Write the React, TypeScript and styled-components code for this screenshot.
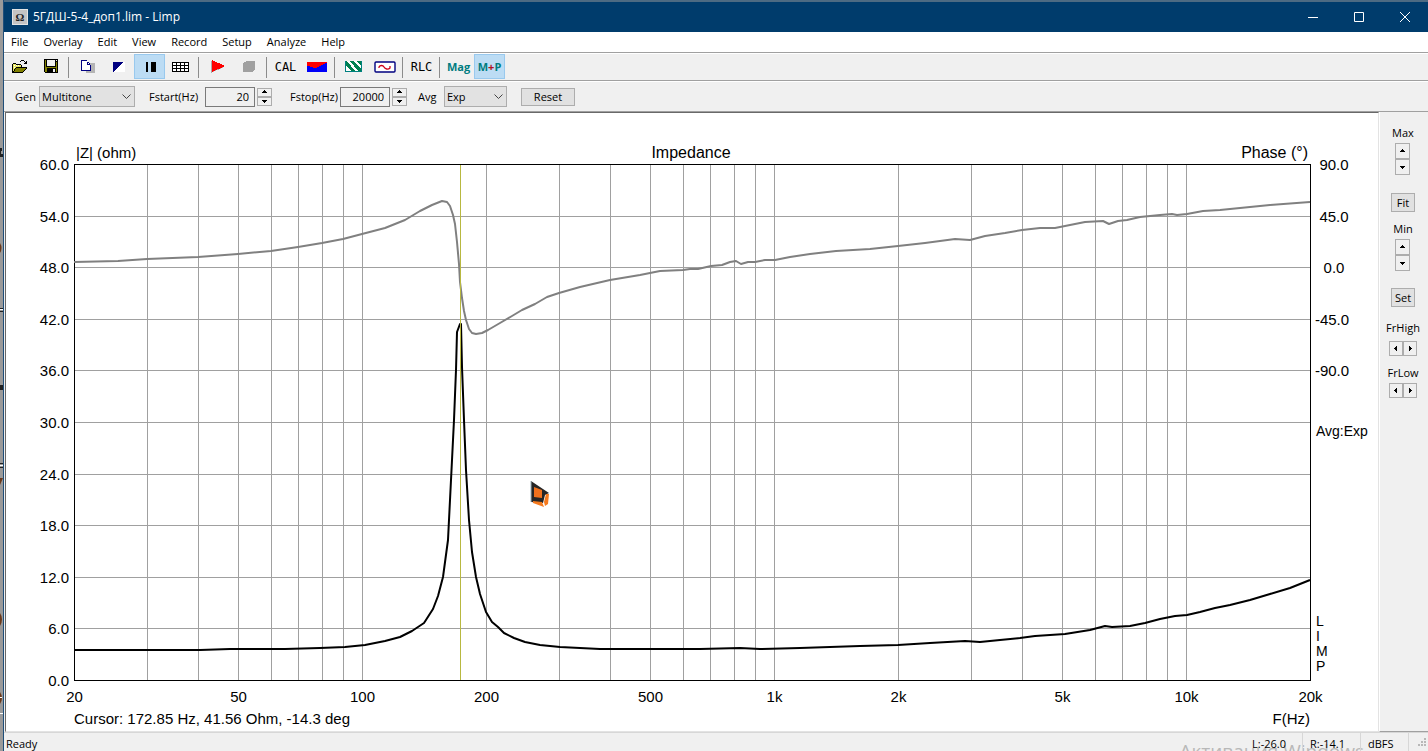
import React from "react";
import styled, { createGlobalStyle } from "styled-components";

const GlobalStyle = createGlobalStyle`
  * { box-sizing: border-box; }
  body {
    margin: 0;
    background: #f0f0f0;
    font-family: "Open Sans", "Noto Sans", sans-serif;
    font-size: 12px;
    line-height: 16px;
    color: #000;
  }
  button, input, select { font: inherit; color: inherit; margin: 0; }
`;

const Desktop = styled.div`
  display: grid;
  grid-template-columns: 4px minmax(0, 1fr);
  min-height: 100vh;
`;

const DesktopEdge = styled.div`
  background: #9a9a9a;
  border-right: 1px solid #1f4e79;
`;

const EdgeArt = styled.svg`
  display: block;
`;

const Window = styled.div`
  display: flex;
  flex-direction: column;
  min-width: 0;
`;

const TitleBar = styled.header`
  display: flex;
  align-items: center;
  height: 32px;
  padding-left: 8px;
  background: #003c6c;
  border-top: 2px solid #4d6b83;
  color: #fff;
`;

const AppIcon = styled.span`
  width: 16px;
  height: 16px;
  margin-right: 5px;
  background: #c4c4c4;
  border: 1px solid #e4e4e4;
  color: #222;
  font: bold 11px/14px "Liberation Serif", serif;
  text-align: center;
`;

const Title = styled.h1`
  flex: 1;
  margin: 0;
  font-size: 12px;
  font-weight: 400;
`;

const CaptionButton = styled.button`
  display: grid;
  place-items: center;
  width: 46px;
  height: 30px;
  padding: 0;
  border: 0;
  background: transparent;
`;

const MenuBar = styled.nav`
  display: flex;
  height: 21px;
  padding-left: 7px;
  gap: 15px;
  background: #fff;
  border-bottom: 1px solid #a0a0a0;
`;

const MenuItem = styled.button`
  padding: 0;
  border: 0;
  background: transparent;
  font-size: 11px;
  line-height: 18px;
`;

const Toolbar = styled.div`
  display: flex;
  height: 28px;
  background: #f0f0f0;
  border-top: 1px solid #fff;
  border-bottom: 1px solid #a0a0a0;
`;

const Tool = styled.button<{ $on?: boolean }>`
  display: grid;
  place-items: center;
  flex: none;
  width: 31px;
  height: 25px;
  padding: 0;
  background: ${(p) => (p.$on ? "#bcdcf4" : "transparent")};
  border: 1px solid ${(p) => (p.$on ? "#99c9ee" : "transparent")};
`;

const ToolSeparator = styled.span`
  flex: none;
  width: 1px;
  height: 21px;
  margin: 3px 3px 0 2px;
  background: #8c8c8c;
`;

const ToolCode = styled.span`
  font: 12px/24px "DejaVu Sans Mono", monospace;
`;

const ToolWord = styled.span`
  color: #007c80;
  font: bold 11px/24px "Open Sans", sans-serif;
`;

const RedPlus = styled.span`
  color: #b01020;
`;

const SettingsBar = styled.div`
  display: flex;
  align-items: center;
  height: 31px;
  padding-left: 11px;
  background: #f0f0f0;
  border-top: 1px solid #fff;
  border-bottom: 1px solid #a0a0a0;
`;

const FieldLabel = styled.label<{ $width: number }>`
  flex: none;
  width: ${(p) => p.$width}px;
  font-size: 11px;
  white-space: nowrap;
`;

const SelectBox = styled.span<{ $width: number }>`
  display: grid;
  align-items: center;
  width: ${(p) => p.$width}px;
  margin-right: 14px;
`;

const Select = styled.select`
  grid-area: 1 / 1;
  width: 100%;
  height: 21px;
  padding: 0 2px;
  appearance: none;
  background: #e2e2e2;
  border: 1px solid #adadad;
  border-radius: 0;
  font-size: 11px;
`;

const Chevron = styled.svg`
  grid-area: 1 / 1;
  justify-self: end;
  margin-right: 4px;
  pointer-events: none;
`;

const NumberInput = styled.input`
  width: 50px;
  height: 20px;
  margin-right: 2px;
  padding: 0 5px;
  background: #f0f0f0;
  border: 1px solid #7a7a7a;
  font-size: 11px;
  text-align: right;
`;

const Spinner = styled.span<{ $row?: boolean }>`
  display: flex;
  flex-direction: ${(p) => (p.$row ? "row" : "column")};
`;

const SpinButton = styled.button<{ $w: number; $h: number }>`
  display: grid;
  place-items: center;
  width: ${(p) => p.$w}px;
  height: ${(p) => p.$h}px;
  padding: 0;
  background: #f0f0f0;
  border: 1px solid #adadad;
`;

const PushButton = styled.button<{ $w: number; $h: number }>`
  width: ${(p) => p.$w}px;
  height: ${(p) => p.$h}px;
  padding: 0;
  background: #e1e1e1;
  border: 1px solid #adadad;
  font-size: 11px;
  line-height: 16px;
`;

const FieldGroup = styled.div<{ $after: number }>`
  display: flex;
  align-items: center;
  margin-right: ${(p) => p.$after}px;
`;

const Content = styled.main`
  display: flex;
  flex: 1;
  min-height: 0;
`;

const ChartPanel = styled.section`
  display: flex;
  flex: 1;
  min-width: 0;
  margin-left: 1px;
  background: #fff;
  border-top: 1px solid #696969;
  border-left: 1px solid #696969;
  border-right: 1px solid #e3e3e3;
  border-bottom: 1px solid #e3e3e3;
`;

const ChartSvg = styled.svg`
  display: block;
  flex: 1;
  width: 100%;
  min-width: 0;
  font-family: "Liberation Sans", Arial, sans-serif;
  font-size: 15px;
`;

const SidePanel = styled.aside`
  display: flex;
  flex: none;
  flex-direction: column;
  align-items: center;
  width: 49px;
  padding: 13px 2px 0 0;
  background: #f0f0f0;
  border-left: 1px solid #fff;
  border-bottom: 1px solid #a0a0a0;
`;

const SideGroup = styled.div<{ $after: number; $gap?: number }>`
  display: flex;
  flex-direction: column;
  align-items: center;
  gap: ${(p) => p.$gap ?? 2}px;
  margin-bottom: ${(p) => p.$after}px;
`;

const SideLabel = styled.span`
  font-size: 11px;
`;

const StatusBar = styled.footer`
  position: relative;
  display: flex;
  height: 19px;
  padding-left: 2px;
  overflow: hidden;
  background: #f0f0f0;
  border-top: 1px solid #d7d7d7;
  font-size: 11px;
  line-height: 22px;
`;

const StatusMessage = styled.span`
  flex: 1;
`;

const StatusCell = styled.span<{ $w: number }>`
  z-index: 1;
  width: ${(p) => p.$w}px;
  padding-left: 7px;
  border-right: 1px solid #d7d7d7;
`;

const SizeGrip = styled.svg`
  margin: 5px 1px 0 8px;
`;

const Watermark = styled.span`
  position: absolute;
  right: 64px;
  top: 6px;
  color: #b8b8b8;
  font-size: 19px;
  line-height: 24px;
  white-space: nowrap;
`;

const LEFT = 74;
const RIGHT = 1310;
const TOP = 164;
const BOTTOM = 680;
const DECADE = (RIGHT - LEFT) / 3;

const freqX = (f: number) => Math.round(LEFT + DECADE * Math.log10(f / 20)) + 0.5;
const rowY = (i: number) => Math.round(TOP + ((BOTTOM - TOP) / 10) * i - 0.1) + 0.5;

const gridFreqs = [10, 100, 1000, 10000]
  .flatMap((d) => [1, 2, 3, 4, 5, 6, 7, 8, 9].map((n) => n * d))
  .filter((f) => f > 20 && f < 20000);

const freqLabels: [number, string][] = [
  [20, "20"], [50, "50"], [100, "100"], [200, "200"], [500, "500"],
  [1000, "1k"], [2000, "2k"], [5000, "5k"], [10000, "10k"], [20000, "20k"],
];
const ohmLabels = ["60.0", "54.0", "48.0", "42.0", "36.0", "30.0", "24.0", "18.0", "12.0", "6.0", "0.0"];
const phaseLabels = ["90.0", "45.0", "0.0", "-45.0", "-90.0"];

const phaseCurve =
  "74,262 118,261 147,259 198,257 238,254 271,251 298,247 322,243 343,239 362,234 385,228 405,220 420,211 432,205 442,201 447,202 450,206 453,215 455,224 457,242 459,264 460,282 462,298 464,311 466,320 469,329 472,333 476,334 482,333 488,330 500,323 512,316 522,310 535,304 547,297 559,293 580,287 610,280 640,275 660,271 683,270 690,269 698,269 711,266 722,265 730,262 736,261 741,264 748,262 755,262 765,260 775,260 790,257 810,254 836,251 870,249 898,246 925,243 955,239 970,240 985,236 1005,233 1022,230 1040,228 1055,228 1070,225 1085,222 1103,221 1109,224 1118,221 1127,220 1140,217 1160,215 1172,214 1177,215 1187,214 1203,211 1220,210 1240,208 1270,205 1310,202";
const impedanceCurve =
  "74,650 200,650 230,649 285,649 320,648 345,647 365,645 385,641 400,637 412,631 424,623 433,609 438,596 443,577 448,540 450,500 452,460 454,420 456,370 457,332 460,324 461,324 462,367 464,420 466,470 469,520 472,552 476,577 480,594 486,612 492,622 498,627 504,633 514,638 525,642 540,645 560,647 600,649 670,649 700,649 740,648 760,649 800,648 830,647 860,646 898,645 930,643 965,641 980,642 1000,640 1020,638 1035,636 1065,634 1090,630 1105,626 1112,627 1130,626 1145,623 1160,619 1175,616 1187,615 1200,612 1215,608 1230,605 1250,600 1270,594 1290,588 1300,584 1310,580";

function Arrow({ dir }: { dir: "up" | "down" | "left" | "right" }) {
  const d = {
    up: "M3 1h1v1h1v1h1v1H1V3h1V2h1z",
    down: "M1 2h5v1H5v1H4v1H3V4H2V3H1z",
    left: "M4 1v5H3V5H2V4H1V3h1V2h1V1z",
    right: "M2 1h1v1h1v1h1v1H4v1H3v1H2z",
  }[dir];
  return (
    <svg width="7" height="7" viewBox="0 0 7 7" shapeRendering="crispEdges" aria-hidden="true">
      <path d={d} />
    </svg>
  );
}

function VerticalSpin({ label, w, h }: { label: string; w: number; h: number }) {
  return (
    <Spinner>
      <SpinButton $w={w} $h={h} aria-label={`${label} up`}><Arrow dir="up" /></SpinButton>
      <SpinButton $w={w} $h={h} aria-label={`${label} down`}><Arrow dir="down" /></SpinButton>
    </Spinner>
  );
}

function HorizontalSpin({ label }: { label: string }) {
  return (
    <Spinner $row>
      <SpinButton $w={14} $h={15} aria-label={`${label} left`}><Arrow dir="left" /></SpinButton>
      <SpinButton $w={14} $h={15} aria-label={`${label} right`}><Arrow dir="right" /></SpinButton>
    </Spinner>
  );
}

function Dropdown({ id, width, value }: { id: string; width: number; value: string }) {
  return (
    <SelectBox $width={width}>
      <Select id={id} defaultValue={value}>
        <option>{value}</option>
      </Select>
      <Chevron width="9" height="6" viewBox="0 0 9 6">
        <path d="M.5.5l4 4 4-4" fill="none" stroke="#444" />
      </Chevron>
    </SelectBox>
  );
}

function Icon({ w = 20, h = 16, children }: { w?: number; h?: number; children: React.ReactNode }) {
  return (
    <svg width={w} height={h} viewBox={`0 0 ${w} ${h}`} shapeRendering="crispEdges" aria-hidden="true">
      {children}
    </svg>
  );
}

function ToolbarRow() {
  return (
    <Toolbar>
      <Tool aria-label="Open">
        <Icon w={17} h={16}>
          <path d="M1 14V5h1V4h3v1h5v3H5v1H4v2H3v2H2v1z" fill="#e8e860" stroke="none" />
          <path d="M1 5h1v9H1zM2 4h3v1H2zM5 5h5v1H5zM10 6h1v2h-1z" />
          <path d="M5 9h11l-4 5H2z" fill="#808000" />
          <path d="M5 8h11v1H5zM4 9h1v1H4zM3 10h1v2H3zM2 12h1v2H2zM1 13h11v1H1zM12 12h1v1h-1zM13 11h1v1h-1zM14 10h1v1h-1zM15 9h1v1h-1zM9 2h1v1H9zM10 1h3v1h-3zM13 2h1v1h-1zM14 3h1v1h-1zM15 2h1v3h-1zM13 4h2v1h-2z" />
          <path d="M3 6h1v1H3zM5 6h1v1H5zM7 6h1v1H7zM3 8h1v1H3z" fill="#fff" />
        </Icon>
      </Tool>
      <Tool aria-label="Save">
        <Icon w={14} h={15}>
          <path d="M0 0h14v14H1l-1-1z" />
          <path d="M1 1h1v12H1zM12 3h1v10h-1zM2 8h10v1H2zM2 9h1v4H2z" fill="#808000" />
          <path d="M3 1h8v6H3zM12 1h1v1h-1z" fill="#f0f0f0" />
          <path d="M9 10h2v3H9z" fill="#f0f0f0" />
        </Icon>
      </Tool>
      <ToolSeparator />
      <Tool aria-label="Copy">
        <Icon w={14} h={13}>
          <path d="M7 3h7v10H5V9h4z" fill="#b4b4b4" />
          <path d="M1 1h5l3 3v7H1z" fill="#fff" />
          <path d="M0 0h6v1H0zM0 0h1v11H0zM0 10h10v1H0zM9 4h1v7H9zM6 1h1v1H6zM7 2h1v1H7zM8 3h1v1H8zM6 1v4h4V4H7V1z" fill="#000080" />
        </Icon>
      </Tool>
      <Tool aria-label="Black and white">
        <Icon w={12} h={10}>
          <path d="M0 0h12v10H0z" fill="#fff" />
          <path d="M0 0h11L0 10z" fill="#000080" />
        </Icon>
      </Tool>
      <Tool $on aria-label="Fill bars">
        <Icon w={13} h={10}>
          <path d="M3 0h2v10H3zM8 0h5v10H8z" />
        </Icon>
      </Tool>
      <Tool aria-label="Grid">
        <Icon w={17} h={10}>
          <path d="M0 0h17v10H0z" />
          <path d="M1 1h3v2H1zM5 1h3v2H5zM9 1h3v2H9zM13 1h3v2h-3zM1 4h3v2H1zM5 4h3v2H5zM9 4h3v2H9zM13 4h3v2h-3zM1 7h3v2H1zM5 7h3v2H5zM9 7h3v2H9zM13 7h3v2h-3z" fill="#fff" />
        </Icon>
      </Tool>
      <ToolSeparator />
      <Tool aria-label="Start">
        <Icon w={14} h={13}>
          <path d="M0 1h2v11H0z" fill="#aaa" />
          <path d="M0 13l13-6H9l-8 4z" fill="#aaa" />
          <path d="M1 0l13 6-13 6z" fill="#f00" />
        </Icon>
      </Tool>
      <Tool aria-label="Stop">
        <Icon w={12} h={11}>
          <path d="M3 0h9v9h-1v1h-1v1H0V2h1V1h2z" fill="#a0a0a0" />
        </Icon>
      </Tool>
      <ToolSeparator />
      <Tool><ToolCode>CAL</ToolCode></Tool>
      <Tool aria-label="Calibration spectrum">
        <Icon w={20} h={10}>
          <path d="M0 0h20v10H0z" fill="#0000f8" />
          <path d="M0 0h20v1h-2v1h-2v1h-2v1h-2v1h-2v1H6V5H3V4H0z" fill="#f00" />
        </Icon>
      </Tool>
      <ToolSeparator />
      <Tool aria-label="Generator setup">
        <Icon w={17} h={11}>
          <path d="M0 0h17v11H0z" fill="#fff" />
          <path d="M5 0h4l8 9v2h-3zM0 0h2l9 11H7L1 4v7H0zM12 0h5v6z" fill="#008050" />
          <path d="M0 10h17v1H0zM0 0h1v11H0zM16 0h1v11h-1z" fill="#008080" />
        </Icon>
      </Tool>
      <Tool aria-label="Measurement setup">
        <svg width="22" height="12" viewBox="0 0 22 12" aria-hidden="true">
          <rect x="1" y="1" width="20" height="10" rx="1" fill="#fff" stroke="#000080" strokeWidth="1.4" />
          <path d="M5 7V6c1-2 4-2 5 0s4 3 6 1V5" fill="none" stroke="#d00018" strokeWidth="1.3" />
        </svg>
      </Tool>
      <ToolSeparator />
      <Tool><ToolCode>RLC</ToolCode></Tool>
      <ToolSeparator />
      <Tool><ToolWord>Mag</ToolWord></Tool>
      <Tool $on><ToolWord>M<RedPlus>+</RedPlus>P</ToolWord></Tool>
    </Toolbar>
  );
}

function SettingsRow() {
  return (
    <SettingsBar>
      <FieldLabel htmlFor="gen" $width={24}>Gen</FieldLabel>
      <Dropdown id="gen" width={96} value="Multitone" />
      <FieldGroup $after={18}>
        <FieldLabel htmlFor="fstart" $width={56}>Fstart(Hz)</FieldLabel>
        <NumberInput id="fstart" defaultValue="20" />
        <VerticalSpin label="Fstart" w={15} h={9} />
      </FieldGroup>
      <FieldGroup $after={11}>
        <FieldLabel htmlFor="fstop" $width={50}>Fstop(Hz)</FieldLabel>
        <NumberInput id="fstop" defaultValue="20000" />
        <VerticalSpin label="Fstop" w={15} h={9} />
      </FieldGroup>
      <FieldLabel htmlFor="avg" $width={26}>Avg</FieldLabel>
      <Dropdown id="avg" width={63} value="Exp" />
      <PushButton $w={54} $h={18}>Reset</PushButton>
    </SettingsBar>
  );
}

function ImpedanceChart() {
  return (
    <ChartSvg viewBox="6 113 1372 618" role="img" aria-label="Impedance">
      <g stroke="#a0a0a0" shapeRendering="crispEdges">
        {gridFreqs.map((f) => (
          <line key={f} x1={freqX(f)} x2={freqX(f)} y1={TOP} y2={BOTTOM} />
        ))}
        {ohmLabels.slice(1, -1).map((t, i) => (
          <line key={t} x1={LEFT} x2={RIGHT} y1={rowY(i + 1)} y2={rowY(i + 1)} />
        ))}
      </g>
      <rect x={LEFT + 0.5} y={TOP + 0.5} width={RIGHT - LEFT} height={BOTTOM - TOP} fill="none" stroke="#000" shapeRendering="crispEdges" />
      <g fill="none" strokeWidth="2" strokeLinejoin="round">
        <polyline points={phaseCurve} stroke="#808080" />
        <polyline points={impedanceCurve} stroke="#000" />
      </g>
      <line x1="460.5" x2="460.5" y1={TOP + 1} y2={BOTTOM} stroke="#b8b840" shapeRendering="crispEdges" />
      <g textAnchor="end">
        {ohmLabels.map((t, i) => (
          <text key={t} x="69" y={rowY(i) + 5.5}>{t}</text>
        ))}
      </g>
      <g textAnchor="middle">
        {phaseLabels.map((t, i) => (
          <text key={t} x={t[0] === "-" ? 1332 : 1334} y={rowY(i) + 5.5}>{t}</text>
        ))}
        {freqLabels.map(([f, t]) => (
          <text key={t} x={freqX(f)} y="702">{t}</text>
        ))}
      </g>
      <text x="76" y="158">|Z| (ohm)</text>
      <g fontSize="16">
        <text x="691" y="158" textAnchor="middle">Impedance</text>
        <text x="1308" y="158" textAnchor="end">Phase (°)</text>
      </g>
      <text x="74" y="724">Cursor: 172.85 Hz, 41.56 Ohm, -14.3 deg</text>
      <text x="1310" y="724" textAnchor="end">F(Hz)</text>
      <g fontSize="14">
        <text x="1316" y="436">Avg:Exp</text>
        {["L", "I", "M", "P"].map((c, i) => (
          <text key={c} x="1316" y={626 + i * 15}>{c}</text>
        ))}
      </g>
      <g>
        <path d="M531 481L549 493 545 495 543 503 531 502z" fill="#262626" />
        <path d="M534 487l8 3v8l-8-1z" fill="#f0701c" />
        <path d="M533 501l9 1 2 5-11-4z" fill="#f57a1e" />
        <path d="M546 494h3l-1 10-3 2-1-4z" fill="#f57a1e" />
        <path d="M531 481v21" stroke="#9cb0b8" />
      </g>
    </ChartSvg>
  );
}

function SideControls() {
  return (
    <SidePanel>
      <SideGroup $after={18}>
        <SideLabel>Max</SideLabel>
        <VerticalSpin label="Max" w={15} h={16} />
      </SideGroup>
      <SideGroup $after={9}>
        <PushButton $w={24} $h={19}>Fit</PushButton>
      </SideGroup>
      <SideGroup $after={17}>
        <SideLabel>Min</SideLabel>
        <VerticalSpin label="Min" w={15} h={16} />
      </SideGroup>
      <SideGroup $after={13}>
        <PushButton $w={24} $h={19}>Set</PushButton>
      </SideGroup>
      <SideGroup $after={9} $gap={5}>
        <SideLabel>FrHigh</SideLabel>
        <HorizontalSpin label="FrHigh" />
      </SideGroup>
      <SideGroup $after={0}>
        <SideLabel>FrLow</SideLabel>
        <HorizontalSpin label="FrLow" />
      </SideGroup>
    </SidePanel>
  );
}

export default function App() {
  return (
    <>
      <GlobalStyle />
      <Desktop>
        <DesktopEdge>
          <EdgeArt width="3" height="740" viewBox="0 0 3 740" aria-hidden="true">
            <path d="M0 148h2v3H1v3h2v3H0zM0 308h3v1H0zM0 311h3v1H0zM0 385h3v5H0zM0 463h3v1H0zM0 467h3v1H0z" fill="#222" />
            <path d="M0 243q3 5 0 10zM0 478h3l-3 7zM0 613q4 6 0 13zM0 692q4 6 0 12z" fill="#6b3a1c" />
            <path d="M0 309h3v1H0zM0 465h3v1H0zM0 697h2v1H0zM0 713h3v1H0z" fill="#fff" />
          </EdgeArt>
        </DesktopEdge>
        <Window>
          <TitleBar>
            <AppIcon>Ω</AppIcon>
            <Title>5ГДШ-5-4_доп1.lim - Limp</Title>
            <CaptionButton aria-label="Minimize">
              <svg width="10" height="10"><path d="M0 5.5h10" stroke="#fff" /></svg>
            </CaptionButton>
            <CaptionButton aria-label="Maximize">
              <svg width="10" height="10"><path d="M.5.5h9v9h-9z" fill="none" stroke="#fff" /></svg>
            </CaptionButton>
            <CaptionButton aria-label="Close">
              <svg width="10" height="10"><path d="M0 0l10 10M10 0L0 10" stroke="#fff" /></svg>
            </CaptionButton>
          </TitleBar>
          <MenuBar>
            {["File", "Overlay", "Edit", "View", "Record", "Setup", "Analyze", "Help"].map((m) => (
              <MenuItem key={m}>{m}</MenuItem>
            ))}
          </MenuBar>
          <ToolbarRow />
          <SettingsRow />
          <Content>
            <ChartPanel><ImpedanceChart /></ChartPanel>
            <SideControls />
          </Content>
          <StatusBar>
            <Watermark>Активация Windows</Watermark>
            <StatusMessage>Ready</StatusMessage>
            <StatusCell $w={58}>L:-26.0</StatusCell>
            <StatusCell $w={58}>R:-14.1</StatusCell>
            <StatusCell $w={48}>dBFS</StatusCell>
            <SizeGrip width="10" height="10" aria-hidden="true">
              <path d="M7 0h2v2H7zM4 3h2v2H4zM7 3h2v2H7zM1 6h2v2H1zM4 6h2v2H4zM7 6h2v2H7z" fill="#b8b8b8" />
            </SizeGrip>
          </StatusBar>
        </Window>
      </Desktop>
    </>
  );
}
